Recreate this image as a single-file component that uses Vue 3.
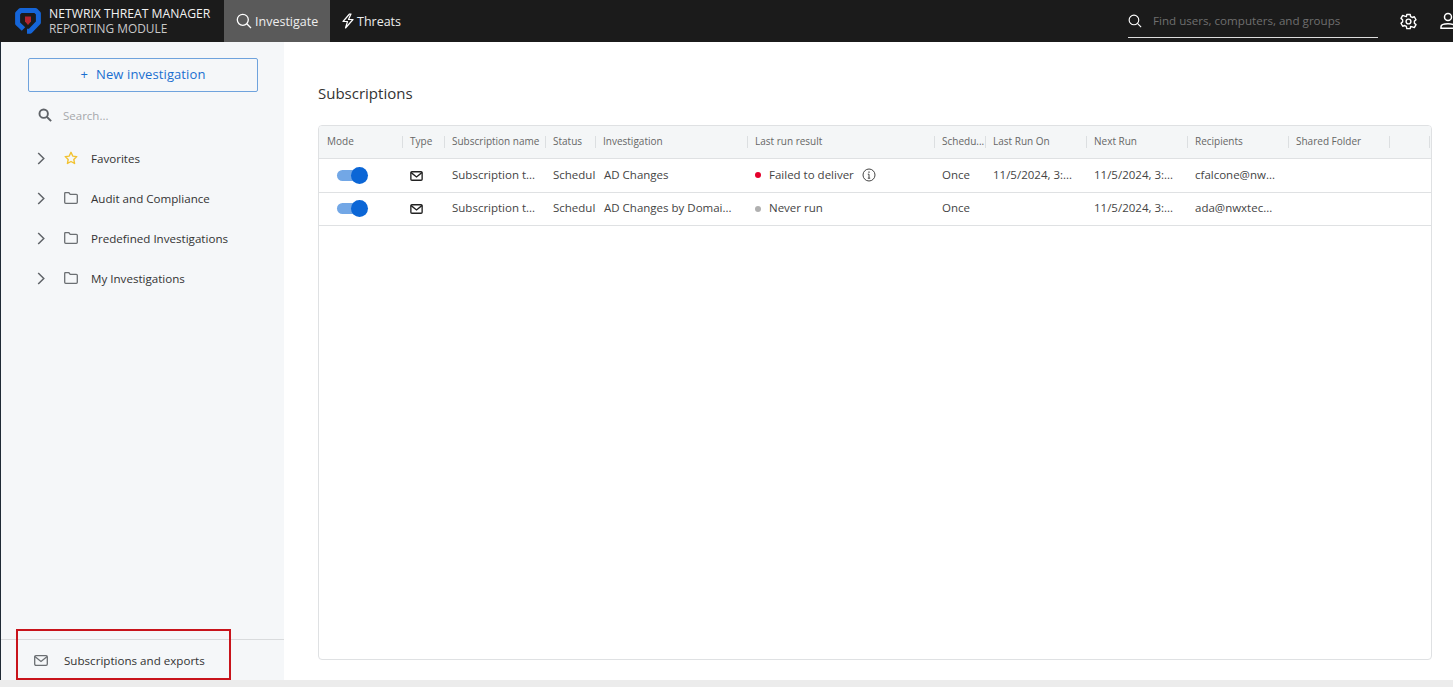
<template>
  <div class="app">
    <header class="topbar">
      <div class="brand">
        <svg class="logo" viewBox="0 0 26 26" width="26" height="26" fill="none">
          <path d="M8.500 21 2.600 15.500V5.500L5.500 2.600H20.500L23.400 5.500V14.500L15 23.200H12" stroke="#1565d8" stroke-width="5" stroke-linejoin="round" />
          <path d="M10 8.500h6v5l-3 3.500-3-3.500z" fill="#b3242e" />
        </svg>
        <div class="brand-text">
          <div>NETWRIX THREAT MANAGER</div>
          <div class="brand-sub">REPORTING MODULE</div>
        </div>
      </div>
      <a class="nav-item nav-item--active">
        <svg viewBox="0 0 16 16" width="16" height="16" fill="none" stroke="#fff" stroke-width="1.300">
          <circle cx="6.800" cy="6.800" r="5.500" />
          <path d="M10.800 10.800 15 15" />
        </svg>
        Investigate
      </a>
      <a class="nav-item">
        <svg viewBox="2 0 12 16" width="12" height="16" fill="none" stroke="#fff" stroke-width="1.200" stroke-linejoin="round">
          <path d="M9.500 1 3 8.500h4.500L5.500 15 13 6.500H8.500L11 1z" />
        </svg>
        Threats
      </a>
      <div class="top-search">
        <svg viewBox="0 0 16 16" width="14" height="14" fill="none" stroke="#fff" stroke-width="1.300">
          <circle cx="6.800" cy="6.800" r="5.500" />
          <path d="M10.800 10.800 15 15" />
        </svg>
        <span>Find users, computers, and groups</span>
      </div>
      <svg class="gear" viewBox="0 0 24 24" width="17" height="17" fill="none" stroke="#fff" stroke-width="2" stroke-linejoin="round">
        <path d="M9.600 2h4.800l.6 3 2.300 1.300 2.900-1 2.400 4.200-2.300 2v2.900l2.300 2-2.400 4.200-2.900-1L15 19l-.6 3H9.600L9 19l-2.300-1.300-2.900 1-2.400-4.200 2.300-2v-2.900l-2.300-2 2.400-4.200 2.900 1L9 5z" />
        <circle cx="12" cy="12" r="3.400" />
      </svg>
      <svg class="user" viewBox="0 0 18 18" width="18" height="18" fill="none" stroke="#fff" stroke-width="1.500">
        <circle cx="9" cy="5" r="3.500" />
        <path d="M2 16.200v-1.400c0-2 2.500-3 7-3s7 1 7 3v1.400z" />
      </svg>
    </header>

    <div class="body">
      <aside class="sidebar">
        <button class="new-btn"><span class="plus">+</span>New investigation</button>
        <div class="side-search">
          <svg viewBox="0 0 16 16" width="14" height="14" fill="none" stroke="#5f6368" stroke-width="2.200">
            <circle cx="6.500" cy="6.500" r="4.800" />
            <path d="M10 10 15 15" />
          </svg>
          <span>Search...</span>
        </div>
        <ul class="tree">
          <li v-for="item in tree" :key="item.label" class="tree-row">
            <svg class="chevron" viewBox="0 0 8 14" width="8" height="13" fill="none" stroke="#5f6368" stroke-width="1.600">
              <path d="M1 1l6 6-6 6" />
            </svg>
            <svg v-if="item.star" class="tree-icon" viewBox="0 0 16 16" width="14" height="14" fill="none" stroke="#f2c230" stroke-width="1.600" stroke-linejoin="round">
              <path d="M8 1.500l2 4.300 4.600.6-3.400 3.200.9 4.700L8 12l-4.100 2.300.9-4.700L1.400 6.400 6 5.800z" />
            </svg>
            <svg v-else class="tree-icon" viewBox="0 0 14 12" width="14" height="12" fill="none" stroke="#6b6f73" stroke-width="1.300" stroke-linejoin="round">
              <path d="M.7 1.500a1 1 0 0 1 1-1h3l1.500 1.800h6.100a1 1 0 0 1 1 1v7a1 1 0 0 1-1 1H1.700a1 1 0 0 1-1-1z" />
            </svg>
            <span>{{ item.label }}</span>
          </li>
        </ul>
        <div class="side-footer">
          <svg viewBox="0 0 14 11" width="14" height="11" fill="none" stroke="#6b6f73" stroke-width="1.300">
            <rect x=".7" y=".7" width="12.600" height="9.600" rx="1.200" />
            <path d="M.8 1.500 7 6.500l6.200-5" />
          </svg>
          <span>Subscriptions and exports</span>
        </div>
      </aside>

      <main class="content">
        <h2 class="page-title">Subscriptions</h2>
        <div class="table">
          <div class="row row--head">
            <div v-for="col in columns" :key="col" class="th">{{ col }}</div>
            <div class="th"></div>
          </div>
          <div v-for="row in rows" :key="row.name + row.investigation" class="row">
            <div class="td td--toggle"><span class="toggle"><i></i></span></div>
            <div class="td td--mail">
              <svg viewBox="0 0 14 11" width="13" height="10" fill="none" stroke="#222" stroke-width="1.500">
                <rect x=".8" y=".8" width="12.400" height="9.400" rx="1.200" />
                <path d="M.8 1.500 7 6.500l6.200-5" />
              </svg>
            </div>
            <div class="td td--text">{{ row.name }}</div>
            <div class="td td--text td--status">{{ row.status }}</div>
            <div class="td td--text td--investigation">{{ row.investigation }}</div>
            <div class="td td--text td--result">
              <span class="dot" :class="{ 'dot--failed': row.failed }"></span>
              {{ row.result }}
              <svg v-if="row.failed" class="info" viewBox="0 0 14 14" width="14" height="14" fill="none" stroke="#444" stroke-width="1">
                <circle cx="7" cy="7" r="6" />
                <path d="M7 6.200v4M5.800 10.200h2.400M5.800 6.200H7" />
                <path d="M7 3.600v1.200" stroke-width="1.300" />
              </svg>
            </div>
            <div class="td td--text">Once</div>
            <div class="td td--text">{{ row.lastRun }}</div>
            <div class="td td--text">{{ row.nextRun }}</div>
            <div class="td td--text">{{ row.recipients }}</div>
            <div class="td"></div>
            <div class="td"></div>
          </div>
        </div>
      </main>
    </div>
    <div class="bottom-strip"></div>
    <div class="callout"></div>
  </div>
</template>

<script setup>
const tree = [
  { label: 'Favorites', star: true },
  { label: 'Audit and Compliance' },
  { label: 'Predefined Investigations' },
  { label: 'My Investigations' },
]

const columns = [
  'Mode',
  'Type',
  'Subscription name',
  'Status',
  'Investigation',
  'Last run result',
  'Schedu...',
  'Last Run On',
  'Next Run',
  'Recipients',
  'Shared Folder',
]

const rows = [
  {
    name: 'Subscription t...',
    status: 'Schedul',
    investigation: 'AD Changes',
    result: 'Failed to deliver',
    failed: true,
    lastRun: '11/5/2024, 3:...',
    nextRun: '11/5/2024, 3:...',
    recipients: 'cfalcone@nw...',
  },
  {
    name: 'Subscription t...',
    status: 'Schedul',
    investigation: 'AD Changes by Domai...',
    result: 'Never run',
    failed: false,
    lastRun: '',
    nextRun: '11/5/2024, 3:...',
    recipients: 'ada@nwxtec...',
  },
]
</script>

<style>
html,
body {
  margin: 0;
  overflow: hidden;
}
</style>

<style scoped>
.app {
  position: relative;
  width: 1453px;
  height: 687px;
  display: flex;
  flex-direction: column;
  overflow: hidden;
  background: #fff;
  color: #333;
  font-family: 'Open Sans', sans-serif;
}

.topbar {
  height: 42px;
  flex: none;
  display: flex;
  align-items: center;
  background: #1b1b1b;
  color: #fff;
}

.brand {
  width: 224px;
  height: 100%;
  display: flex;
  align-items: center;
  gap: 8px;
  padding-left: 15px;
  box-sizing: border-box;
}

.logo {
  flex: none;
}

.brand-text {
  font-size: 12.200px;
  line-height: 15px;
  white-space: nowrap;
  color: #f2f2f2;
}

.brand-sub {
  font-size: 11.900px;
  color: #c9c9c9;
}

.nav-item {
  height: 100%;
  display: flex;
  align-items: center;
  gap: 3px;
  padding: 0 12px;
  font-size: 12.500px;
  color: #eee;
  box-sizing: border-box;
}

.nav-item svg {
  flex: none;
}

.nav-item--active {
  width: 106px;
  background: #5a5a5a;
}

.top-search {
  margin-left: auto;
  width: 250px;
  height: 37px;
  display: flex;
  align-items: center;
  gap: 11px;
  border-bottom: 1px solid #ddd;
  box-sizing: border-box;
  font-size: 11.600px;
  color: #6f6f6f;
  margin-top: -4px;
  padding-top: 4px;
  white-space: nowrap;
}

.gear {
  flex: none;
  margin-left: 22px;
}

.user {
  flex: none;
  margin-left: 22px;
  margin-right: -4px;
}

.body {
  flex: 1;
  min-height: 0;
  display: flex;
}

.sidebar {
  width: 284px;
  flex: none;
  display: flex;
  flex-direction: column;
  background: #f5f7f9;
  border-left: 1px solid #1f2a36;
  box-sizing: border-box;
}

.new-btn {
  display: block;
  width: 230px;
  height: 34px;
  margin: 16px 0 0 27px;
  padding: 0 0 2px;
  border: 1px solid #6fa3dd;
  border-radius: 2px;
  background: transparent;
  color: #1a6fd0;
  font-family: inherit;
  font-size: 13px;
  letter-spacing: 0.1px;
}

.plus {
  margin-right: 8px;
}

.side-search {
  display: flex;
  align-items: center;
  gap: 11px;
  margin: 15px 0 0 37px;
  height: 16px;
  font-size: 11.500px;
  color: #a5a8ab;
}

.tree {
  list-style: none;
  margin: 15px 0 0;
  padding: 0;
}

.tree-row {
  height: 40px;
  display: flex;
  align-items: center;
  padding-left: 36px;
  font-size: 11.600px;
  color: #333;
}

.chevron {
  flex: none;
}

.tree-icon {
  flex: none;
  margin-left: 19px;
  margin-right: 13px;
}

.side-footer {
  margin-top: auto;
  height: 40px;
  display: flex;
  align-items: center;
  gap: 16px;
  padding-left: 33px;
  border-top: 1px solid #d9dbdd;
  font-size: 11.600px;
  color: #333;
}

.content {
  flex: 1;
  min-width: 0;
  padding: 0 21px 20px 34px;
  display: flex;
  flex-direction: column;
  box-sizing: border-box;
}

.page-title {
  margin: 41px 0 0;
  font-size: 15px;
  line-height: 20px;
  font-weight: 400;
  color: #333;
}

.table {
  flex: 1;
  margin-top: 22px;
  border: 1px solid #dfe1e3;
  border-radius: 4px;
  overflow: hidden;
}

.row {
  display: grid;
  grid-template-columns: 83px 42px 101px 50px 152px 187px 51px 101px 101px 101px 101px 41px;
  height: 32.500px;
  border-bottom: 1px solid #dfe1e3;
  box-sizing: content-box;
  font-size: 11.500px;
  color: #444;
}

.row--head {
  height: 32px;
  background: #f4f6f7;
}

.th {
  display: flex;
  align-items: center;
  padding: 0 0 2px 8px;
  position: relative;
  font-size: 10px;
  color: #666;
  white-space: nowrap;
  overflow: hidden;
}

.th:not(:first-child)::after {
  content: '';
  position: absolute;
  left: 0;
  top: 10px;
  width: 1px;
  height: 12px;
  background: #dcdfe1;
}

.th:last-child::before {
  content: '';
  position: absolute;
  right: 0;
  top: 10px;
  width: 1px;
  height: 12px;
  background: #dcdfe1;
}

.td {
  display: flex;
  align-items: center;
  padding-left: 8px;
  white-space: nowrap;
  overflow: hidden;
}

.td--text {
  padding-bottom: 2px;
}

.td--status {
  overflow: visible;
}

.td--investigation {
  padding-left: 9px;
}

.td--toggle {
  padding-left: 18px;
  overflow: visible;
}

.toggle {
  position: relative;
  width: 24px;
  height: 11px;
  border-radius: 6px;
  background: #72a7e6;
}

.toggle i {
  position: absolute;
  right: -7px;
  top: -3px;
  width: 17px;
  height: 17px;
  border-radius: 50%;
  background: #0b66d6;
}

.td--mail {
  padding-top: 1px;
}

.td--result {
  gap: 8px;
}

.dot {
  width: 6px;
  height: 6px;
  border-radius: 50%;
  background: #b0b0b0;
  flex: none;
  margin-top: 2px;
}

.dot--failed {
  background: #e4002b;
}

.info {
  margin-top: 2px;
}

.bottom-strip {
  height: 7px;
  flex: none;
  background: #ececec;
}

.callout {
  position: absolute;
  left: 16px;
  top: 629px;
  width: 215px;
  height: 51px;
  border: 2px solid #c8141c;
  box-sizing: border-box;
}
</style>
